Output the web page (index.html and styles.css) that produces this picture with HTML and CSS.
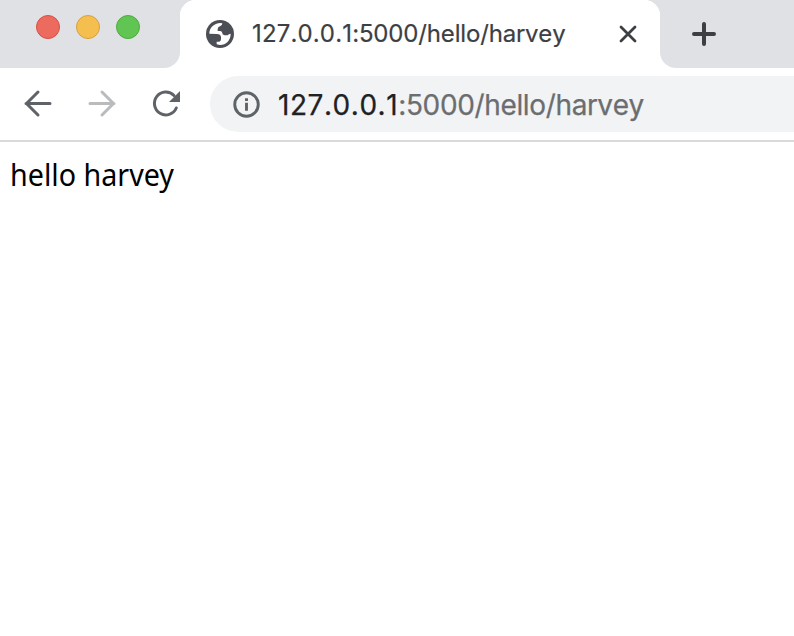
FILE: index.html
```html
<!DOCTYPE html>
<html lang="en">
<head>
<meta charset="utf-8">
<title>127.0.0.1:5000/hello/harvey</title>
<link rel="stylesheet" href="styles.css">
</head>
<body>
<header class="tabstrip">
  <div class="controls">
    <span class="light close"></span><span class="light minimize"></span><span class="light zoom"></span>
  </div>
  <div class="tab">
    <svg class="globe" viewBox="0 0 84 84"><circle cx="42" cy="42" r="42" fill="#4d4f56"/><path fill="#fff" d="M10 41C10 23 24 10 43 9L49 10Q49 18 42 19Q36 20 35 27V33H43Q49 34 49 40Q50 46 60 46H65Q68 41 74 41C74 61 60 75 42 75L32 73V65H40Q45 64 45 57V52Q44 42 33 42Z"/></svg>
    <span class="tab-title"><span class="tab-host">127.0.0.1</span>:5000/hello/harvey</span>
    <svg class="tab-close" viewBox="0 0 18 18"><path d="M2 2L16 16M16 2L2 16"/></svg>
  </div>
  <svg class="new-tab" viewBox="0 0 24 24"><path d="M12 2V22M2 12H22"/></svg>
</header>
<nav class="toolbar">
  <svg class="nav-icon back" viewBox="0 0 32 32"><path d="M28 15.5H4M16 4L4.5 15.5L16 27"/></svg>
  <svg class="nav-icon forward" viewBox="0 0 32 32"><path d="M4 15.5H28M16 4L27.500 15.500L16 27"/></svg>
  <svg class="nav-icon reload" viewBox="0 0 32 32"><path d="M26.300 20A11.400 11.400 0 1 1 24 7.500"/><path class="head" d="M30 3V14H19Z"/></svg>
  <div class="address">
    <svg class="info" viewBox="0 0 28 28"><circle cx="14" cy="14" r="12.2"/><path d="M14 12.300V20.500M14 7.500V10.300"/></svg>
    <span class="url"><span class="host">127.0.0.1</span>:5000/hello/harvey</span>
  </div>
</nav>
<main><span class="message">hello harvey</span></main>
</body>
</html>
```
FILE: styles.css
```css
body {
  margin: 0;
  background: #fff;
  overflow: hidden;
}
svg {
  display: block;
  flex: none;
  fill: none;
  stroke-linecap: round;
}
.tabstrip {
  display: flex;
  height: 68px;
  background: #fff;
}
.controls {
  box-sizing: border-box;
  width: 180px;
  padding: 15px 0 0 36px;
  display: flex;
  gap: 16px;
  background: #dfe1e5;
  border-bottom-right-radius: 16px;
}
.light {
  box-sizing: border-box;
  width: 24px;
  height: 24px;
  border-radius: 50%;
  border: 1px solid;
}
.close { background: #ed6a5e; border-color: #d65045; }
.minimize { background: #f5bf4f; border-color: #d8a03d; }
.zoom { background: #61c554; border-color: #4fab3e; }
.tab {
  box-sizing: border-box;
  width: 480px;
  padding: 0 23px 0 26px;
  display: flex;
  align-items: center;
  background: radial-gradient(circle at 16px 16px, #fff 16px, #dfe1e5 16.5px) 0 0 / 16px 16px no-repeat,
    radial-gradient(circle at 0 16px, #fff 16px, #dfe1e5 16.5px) 100% 0 / 16px 16px no-repeat;
}
.globe {
  width: 28px;
  height: 28px;
}
.tab-title {
  flex: 1;
  margin-left: 18px;
  font: 24px/32px Inter, sans-serif;
  font-kerning: none;
  letter-spacing: -0.15px;
  color: #3c4043;
  -webkit-text-stroke: 0.2px;
  white-space: nowrap;
}
.tab-host { letter-spacing: 0.15px; }
.tab-close {
  width: 18px;
  height: 18px;
  stroke: #3c4043;
  stroke-width: 2.8;
}
.new-tab {
  box-sizing: border-box;
  width: 134px;
  height: 68px;
  padding: 22px 78px 22px 32px;
  background: #dfe1e5;
  border-bottom-left-radius: 16px;
  stroke: #3c4043;
  stroke-width: 4;
}
.toolbar {
  box-sizing: border-box;
  height: 74px;
  padding: 8px 0 8px 22px;
  display: flex;
  align-items: center;
  border-bottom: 2px solid #dadada;
}
.nav-icon {
  width: 32px;
  height: 32px;
  margin-right: 32px;
  stroke: #5f6368;
  stroke-width: 3;
  stroke-linejoin: round;
}
.forward { stroke: #babbbd; }
.reload { margin-right: 28px; }
.reload .head { fill: #5f6368; stroke: none; }
.address {
  flex: 1;
  height: 56px;
  display: flex;
  align-items: center;
  padding-left: 23px;
  border-radius: 28px 0 0 28px;
  background: #f1f3f4;
}
.info {
  width: 27px;
  height: 27px;
  stroke: #5f6368;
  stroke-width: 3;
  stroke-linecap: butt;
}
.url {
  margin-left: 18px;
  padding-top: 1px;
  font: 28px/40px Inter, sans-serif;
  font-kerning: none;
  letter-spacing: -0.35px;
  color: #6b6d70;
  -webkit-text-stroke: 0.25px;
  white-space: nowrap;
}
.host {
  letter-spacing: 0.55px;
  color: #202124;
}
main {
  padding: 10px;
  font: 31px/44px "Noto Sans", sans-serif;
  color: #000;
}
.message {
  display: inline-block;
  transform: scaleX(0.925);
  transform-origin: left;
}
```
